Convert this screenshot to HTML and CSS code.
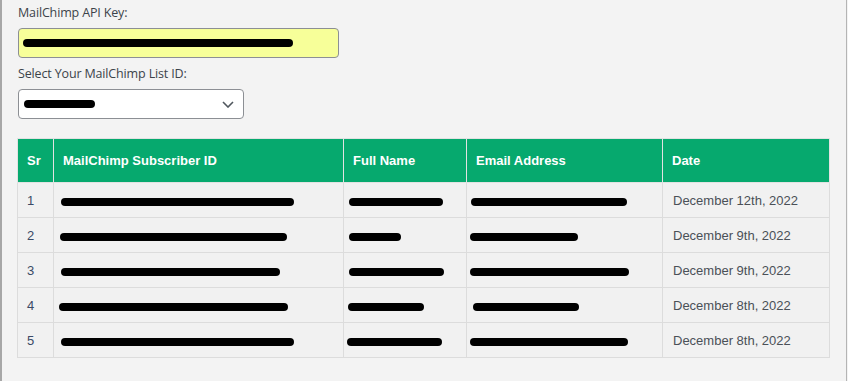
FILE: index.html
```html
<!DOCTYPE html>
<html lang="en">
<head>
    <meta charset="UTF-8">
    <meta name="viewport" content="width=device-width, initial-scale=1.0">
    <title>MailChimp Subscribers</title>
    <link rel="stylesheet" href="styles.css">
</head>
<body>

    <div class="panel">

        <!-- API settings -->
        <div class="settings">
            <label class="field-label" for="api-key">MailChimp API Key:</label>
            <div class="api-input" id="api-key">
                <span class="redact" style="width: 270px"></span>
            </div>

            <label class="field-label" for="list-id">Select Your MailChimp List ID:</label>
            <div class="list-select" id="list-id">
                <span class="redact" style="width: 71px"></span>
                <svg class="chevron" width="12" height="7" viewBox="0 0 12 7">
                    <path d="M1 1l5 5 5-5" fill="none" stroke="#50575e" stroke-width="1.6"/>
                </svg>
            </div>
        </div>

        <!-- Subscribers table -->
        <table class="subscribers">
            <thead>
                <tr>
                    <th class="col-sr">Sr</th>
                    <th class="col-id">MailChimp Subscriber ID</th>
                    <th class="col-name">Full Name</th>
                    <th class="col-email">Email Address</th>
                    <th class="col-date">Date</th>
                </tr>
            </thead>
            <tbody>
                <tr>
                    <td>1</td>
                    <td><span class="redact" style="width: 233px; margin-left: -2px"></span></td>
                    <td><span class="redact" style="width: 94px; margin-left: -4px"></span></td>
                    <td><span class="redact" style="width: 156px; margin-left: -5px"></span></td>
                    <td>December 12th, 2022</td>
                </tr>
                <tr>
                    <td>2</td>
                    <td><span class="redact" style="width: 227px; margin-left: -3px"></span></td>
                    <td><span class="redact" style="width: 52px; margin-left: -4px"></span></td>
                    <td><span class="redact" style="width: 108px; margin-left: -6px"></span></td>
                    <td>December 9th, 2022</td>
                </tr>
                <tr>
                    <td>3</td>
                    <td><span class="redact" style="width: 219px; margin-left: -2px"></span></td>
                    <td><span class="redact" style="width: 95px; margin-left: -4px"></span></td>
                    <td><span class="redact" style="width: 159px; margin-left: -6px"></span></td>
                    <td>December 9th, 2022</td>
                </tr>
                <tr>
                    <td>4</td>
                    <td><span class="redact" style="width: 229px; margin-left: -4px"></span></td>
                    <td><span class="redact" style="width: 76px; margin-left: -5px"></span></td>
                    <td><span class="redact" style="width: 106px; margin-left: -3px"></span></td>
                    <td>December 8th, 2022</td>
                </tr>
                <tr>
                    <td>5</td>
                    <td><span class="redact" style="width: 233px; margin-left: -2px"></span></td>
                    <td><span class="redact" style="width: 95px; margin-left: -6px"></span></td>
                    <td><span class="redact" style="width: 158px; margin-left: -6px"></span></td>
                    <td>December 8th, 2022</td>
                </tr>
            </tbody>
        </table>

    </div>

</body>
</html>
```

FILE: styles.css
```css
/* Basic reset */
* {
    margin: 0;
    padding: 0;
    box-sizing: border-box;
}

body {
    font-family: 'Open Sans', 'Noto Sans', sans-serif;
    font-size: 12.5px;
    color: #3c434a;
    background: #f3f3f3;
    height: 100vh;
    overflow: hidden;
}

/* Admin content area with side rules */
.panel {
    width: 847px;
    height: 100%;
    border-left: 2px solid #a7a7a7;
    border-right: 1px solid #b4b4b4;
    padding: 0 0 0 15px;
}

.settings {
    padding-top: 4px;
}

.field-label {
    display: block;
    line-height: 18px;
    margin-left: 1px;
    margin-bottom: 6px;
    letter-spacing: -0.15px;
}

.api-input {
    width: 321px;
    height: 30px;
    margin-left: 1px;
    margin-bottom: 7px;
    background: #f7ff99;
    border: 1px solid #8c8f94;
    border-radius: 4px;
    display: flex;
    align-items: center;
    padding-left: 4px;
}

.list-select {
    width: 226px;
    height: 30px;
    margin-left: 1px;
    background: #fff;
    border: 1px solid #8c8f94;
    border-radius: 4px;
    display: flex;
    align-items: center;
    justify-content: space-between;
    padding: 0 9px 0 5px;
}

/* Scribbled-out values */
.redact {
    display: inline-block;
    height: 8px;
    background: #000;
    border-radius: 4px;
    vertical-align: middle;
}

.chevron {
    display: block;
}

/* Subscribers table */
.subscribers {
    margin-top: 19px;
    width: 812px;
    border-collapse: collapse;
    font-family: 'Liberation Sans', Arial, sans-serif;
    font-size: 13px;
    table-layout: fixed;
}

.subscribers th,
.subscribers td {
    border: 1px solid #dcdcdc;
    text-align: left;
    padding: 0 9px;
    white-space: nowrap;
    overflow: hidden;
}

.subscribers th {
    height: 44px;
    background: #06a96e;
    color: #fff;
    font-weight: 700;
    border-color: #e2e2e2;
}

.subscribers td {
    height: 35px;
    background: #f1f1f1;
    color: #4a5057;
    padding-top: 1px;
}

.subscribers td:first-child {
    color: #3b4a66;
}

.subscribers td:last-child {
    padding-left: 10px;
}

.col-sr { width: 36px; }
.col-id { width: 290px; }
.col-name { width: 123px; }
.col-email { width: 196px; }
.col-date { width: 167px; }
```
